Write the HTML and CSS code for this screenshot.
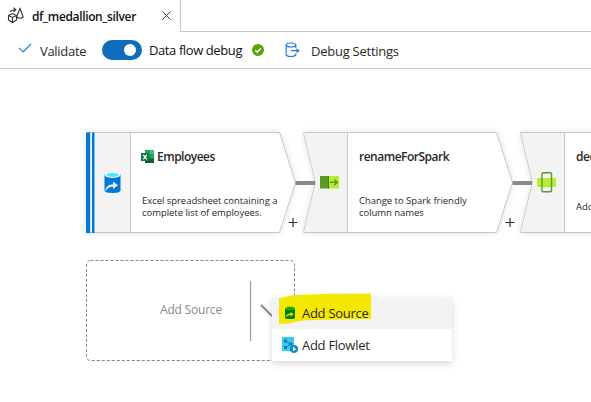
FILE: index.html
```
<!DOCTYPE html>
<html lang="en">
<head>
<meta charset="utf-8">
<title>df_medallion_silver</title>
<link rel="stylesheet" href="styles.css">
</head>
<body>
<header class="tabs">
  <div class="tab">
    <svg class="tab-icon" width="17" height="17" viewBox="0 0 17 17" fill="none" stroke="#333" stroke-width="1.1">
      <path d="M1.500 8.500 5.500 6.500 9.500 8.500V13L5.500 15.500 1.500 13ZM1.500 8.500 5.500 10.500 9.500 8.500M5.500 10.500V15.500"/>
      <path d="M13 1.500 9.500 10Q12.500 12.500 16.200 10Z"/>
      <path d="M3.500 5Q4 2.500 8.500 2.800M6.500.7 8.800 2.800 6.500 5"/>
    </svg>
    <span class="tab-name">df_medallion_silver</span>
    <svg class="close" width="9" height="9" viewBox="0 0 9 9" stroke="#444"><path d="M.5.5 8.500 8.500M8.500.5.5 8.500"/></svg>
  </div>
  <div class="tab-rest"></div>
</header>
<nav class="toolbar">
  <svg class="check" width="14" height="10" viewBox="0 0 14 10" fill="none" stroke="#2f7bd8" stroke-width="1.200"><path d="M1 4.800 5.200 9 13 1"/></svg>
  <span class="validate">Validate</span>
  <span class="toggle"><span class="knob"></span></span>
  <span class="debug">Data flow debug</span>
  <svg class="ok" width="12" height="12" viewBox="0 0 12 12"><circle cx="6" cy="6" r="6" fill="#57a300"/><path d="M3.200 6.200 5.200 8.100 8.900 4.200" fill="none" stroke="#fff" stroke-width="1.500"/></svg>
  <svg class="settings-icon" width="16" height="16" viewBox="0 0 16 16" fill="none" stroke="#2672de" stroke-width="1.200"><ellipse cx="6" cy="3" rx="4.800" ry="2"/><path d="M1.200 3V12.500Q1.200 14.500 6 14.500 9.500 14.500 10.800 13V11.500M10.800 3V6M6 8.700H13"/><path d="M11.500 6.200 14.800 8.700 11.500 11.200Z" fill="#2672de" stroke="none"/></svg>
  <span class="settings">Debug Settings</span>
</nav>
<main class="canvas">
  <svg class="graph" width="591" height="333" viewBox="0 69 591 333" fill="none">
    <g class="shapes">
      <path fill="#fff" stroke="#c8c8c8" d="M86.500 132.500H279.500L295.500 182.500 279.500 232.500H86.500Z"/>
      <path fill="#fff" stroke="#c8c8c8" d="M303.500 132.500H496.500L512.500 182.500 496.500 232.500H303.500L315.500 182.500Z"/>
      <path fill="#fff" stroke="#c8c8c8" d="M600 132.500H520.500L532.500 182.500 520.500 232.500H600Z"/>
    </g>
    <path fill="#f3f3f3" d="M95 133H130V232H95ZM304.200 133H347V232H304.200L316 182.500ZM521.200 133H564V232H521.200L533 182.500Z"/>
    <path stroke="#c8c8c8" d="M130.500 133V232M347.500 133V232M564.500 133V232"/>
    <path fill="#0078d4" d="M86 132.500H90.500V233H86ZM92 132.500H94.500V233H92Z"/>
    <path fill="#fff" d="M90.500 133H92V232H90.500Z"/>
    <path stroke="#8a8a8a" stroke-width="4" d="M295.500 183H315M512.500 183H532"/>
    <path stroke="#333" stroke-width="1.200" d="M288.500 222.500H297.500M293 218V227M505.500 222.500H514.500M510 218V227"/>
    <g>
      <path fill="#0078d4" d="M104.500 174.500V190.500Q105 193 112.500 193T120.500 190.500V174.500Z"/>
      <ellipse cx="112.500" cy="175" rx="8" ry="3" fill="#dff5fb"/><ellipse cx="112.500" cy="175" rx="6.300" ry="1.900" fill="#50e6ff"/>
      <path fill="#d9efff" d="M105 191.500Q105.500 184.500 113 184.200V181.500L118 185.200 113 189V186.800Q108.500 186.500 105 191.500Z"/>
    </g>
    <g>
      <path fill="#185c37" d="M145 150H154V163H145Z"/><path fill="#21a366" d="M145 150H149.500V154H145Z"/><path fill="#33c481" d="M149.500 150H154V154H149.500Z"/><path fill="#21a366" d="M149.500 154H154V158.500H149.500Z"/>
      <path fill="#107c41" d="M141 153H149V161H141Z"/><path stroke="#fff" stroke-width="1.200" d="M143.300 154.800 146.800 159.400M146.800 154.800 143.300 159.400"/>
    </g>
    <path fill="#5b9a23" d="M320 176H329V188.500H320Z"/><path fill="#467d15" d="M328 176H329V188.500H328Z"/><path fill="#b4ec36" d="M329 176H339V188.500H329Z"/><path stroke="#5c9a20" stroke-width="1.500" d="M330 182.300H337M334.300 179.500 337.300 182.300 334.300 185.100"/>
    <rect x="537" y="178" width="19" height="9" rx="1" fill="#b4ec36"/><rect x="542" y="172.700" width="9.500" height="19" rx="1" stroke="#5c9a28" stroke-width="1.400"/>
    <rect x="86.500" y="260.500" width="208" height="100" rx="4" stroke="#858585" stroke-dasharray="3 2"/>
    <path stroke="#999" stroke-width="1.200" d="M250.500 281V341"/>
    <path stroke="#888" stroke-width="2" d="M261 305 272 316"/>
  </svg>
  <h2 class="label n1">Employees</h2>
  <p class="desc n1">Excel spreadsheet containing a<br>complete list of employees.</p>
  <h2 class="label n2">renameForSpark</h2>
  <p class="desc n2">Change to Spark friendly<br>column names</p>
  <h2 class="label n3">dec</h2>
  <p class="desc n3">Add</p>
  <span class="placeholder">Add Source</span>
  <div class="menu">
    <svg class="marker" width="94" height="32" viewBox="0 0 94 32"><path fill="#f5e800" d="M0 5.500Q7 3 16 2L50 .8 92 .5V26L35 27Q20 27 10 30.500L0 31Z"/></svg>
    <div class="item active">
      <svg width="16" height="16" viewBox="0 0 16 16"><path fill="#007b09" d="M3 3V12.500Q3 14 8 14T13 12.500V3Z"/><ellipse cx="8" cy="3" rx="5" ry="1.800" fill="#79ce00"/><ellipse cx="8" cy="3.200" rx="3.500" ry="1" fill="#00a500"/><path fill="#d8df00" d="M3.500 12.500Q4 8.500 8.500 8.200V7L11.800 9.200 8.500 11.500V10Q5.500 10 3.500 12.500Z"/></svg>
      <span class="item-source">Add Source</span>
    </div>
    <div class="item">
      <svg width="16" height="16" viewBox="0 0 16 16"><path fill="#38cdf0" d="M0 0H12V14H0Z"/><path d="M3 4 9 7M3 10.500 9 7" stroke="#177caf"/><path fill="#177caf" d="M2 2.500H5V5.500H2ZM7.500 5.500H10.500V8.500H7.500ZM2 9H5V12H2Z"/><circle cx="12" cy="12" r="4" fill="#188bc2"/><path fill="#fff" d="M11 9.800 14 12 11 14.200Z"/></svg>
      <span class="item-flowlet">Add Flowlet</span>
    </div>
  </div>
</main>
</body>
</html>
```
FILE: styles.css
```
* { box-sizing: border-box; }
body {
  margin: 0;
  width: 591px;
  height: 402px;
  overflow: hidden;
  background: #fff;
  color: #292929;
  font: 13px/18px "Open Sans", "Noto Sans", sans-serif;
  white-space: nowrap;
}
.tabs { display: flex; height: 32px; }
.tab {
  display: flex;
  align-items: center;
  width: 181px;
  padding-left: 7px;
  border-right: 1px solid #c8c8c8;
}
.tab-rest { flex: 1; border-bottom: 1px solid #c8c8c8; }
.tab-icon { margin-top: -2px; }
.tab-name { width: 130px; margin-left: 8px; margin-top: 1px; font-size: 12px; font-weight: 600; color: #111; letter-spacing: -.36px; }
.close { margin-top: -1px; }
.toolbar {
  display: flex;
  align-items: center;
  height: 37px;
  padding-left: 18px;
  border-bottom: 1px solid #c8c8c8;
}
.check { margin-top: -4px; }
.validate { width: 62px; margin-left: 8px; margin-top: 2px; letter-spacing: -.3px; }
.toggle { width: 40px; height: 20px; padding: 4px; border-radius: 10px; background: #0f6cbd; margin-top: -1px; }
.knob { display: block; width: 12px; height: 12px; margin-left: 18px; border-radius: 50%; background: #fff; }
.debug { width: 103px; margin-left: 7px; letter-spacing: -.4px; color: #111; }
.settings-icon { margin-left: 15px; margin-top: 0; }
.ok { flex-shrink: 0; margin-right: 6px; }
.settings { margin-left: 10px; margin-top: 2px; letter-spacing: -.25px; }
.canvas { position: relative; height: 333px; }
.graph { display: block; }
.shapes { filter: drop-shadow(0 0 3px rgba(0, 0, 0, .12)); }
.label, .desc, .placeholder { position: absolute; margin: 0; }
.label { top: 79px; font-size: 12px; line-height: 18px; font-weight: 600; letter-spacing: -.5px; }
.desc { top: 126px; font-size: 9.500px; line-height: 12px; letter-spacing: -.04px; }
.label.n1 { left: 157px; }
.desc.n1 { left: 142px; }
.n2 { left: 359px; }
.n3 { left: 576px; width: 15px; overflow: hidden; }
.desc.n3 { top: 132px; }
.placeholder { left: 160px; top: 232px; font-size: 12px; letter-spacing: -.2px; color: #8a8a8a; }
.menu {
  position: absolute;
  left: 272px;
  top: 228px;
  width: 180px;
  height: 64px;
  background: #fff;
  box-shadow: 0 3px 7px rgba(0, 0, 0, .15);
}
.item { display: flex; align-items: center; gap: 4px; height: 32px; padding-left: 10px; }
.item svg, .item span { position: relative; }
.active { background: #f3f3f3; }
.marker { position: absolute; left: 7px; top: -4px; }
.item-source, .item-flowlet { letter-spacing: -.28px; }
```
